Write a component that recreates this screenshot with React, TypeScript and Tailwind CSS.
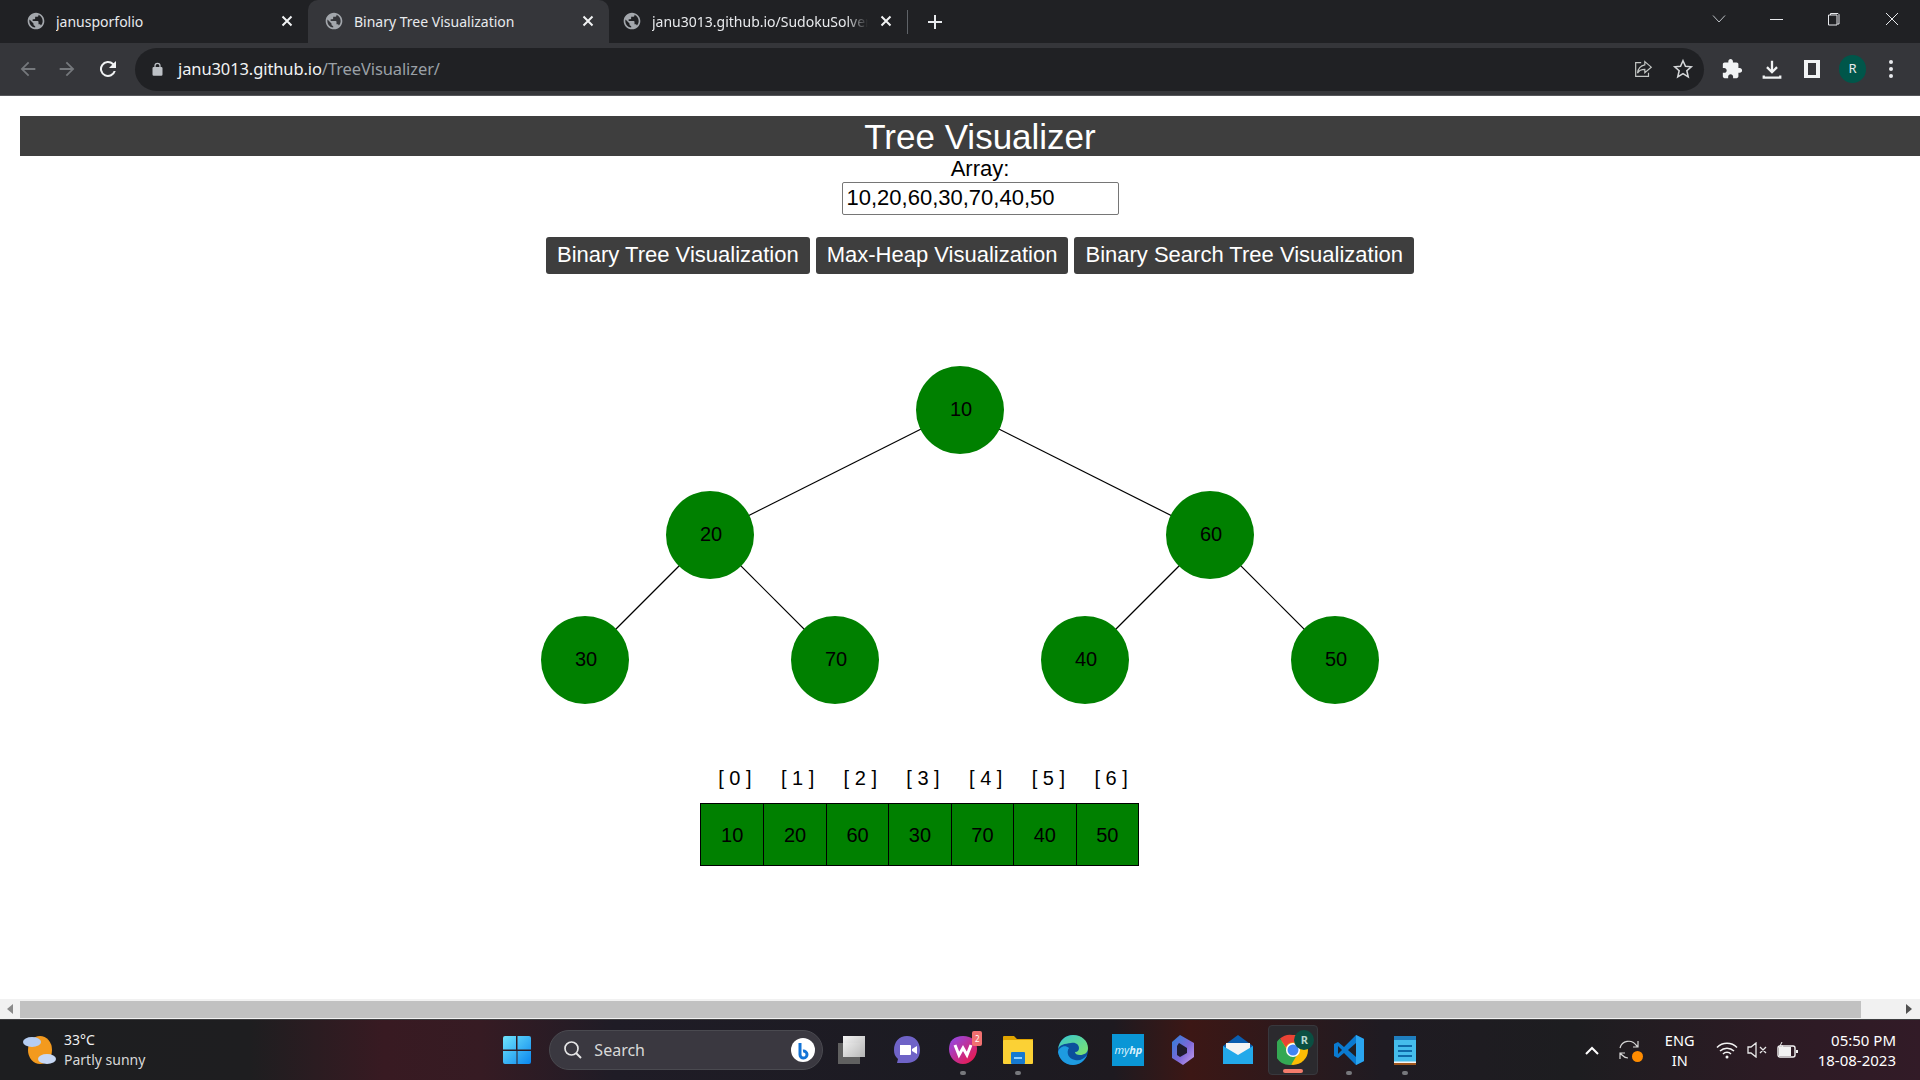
import React from "react";

const UI = { fontFamily: '"Noto Sans", "Open Sans", sans-serif' };
const GLOBE = "M12 2C6.48 2 2 6.48 2 12s4.48 10 10 10 10-4.48 10-10S17.52 2 12 2zm-1 17.93c-3.95-.49-7-3.85-7-7.93 0-.62.08-1.21.21-1.79L9 15v1c0 1.1.9 2 2 2v1.93zm6.9-2.54c-.26-.81-1-1.39-1.9-1.39h-1v-3c0-.55-.45-1-1-1H8v-2h2c.55 0 1-.45 1-1V7h2c1.1 0 2-.9 2-2v-.41c2.93 1.19 5 4.06 5 7.41 0 2.08-.8 3.97-2.1 5.39z";

function Globe() {
  return <svg width="20" height="20" viewBox="0 0 24 24" className="shrink-0"><path d={GLOBE} fill="#a3a7ac" /></svg>;
}
function CloseX() {
  return <svg width="12" height="12" viewBox="0 0 12 12" className="shrink-0"><path d="M1.500 1.500l9 9M10.500 1.500l-9 9" stroke="#f1f3f4" strokeWidth="2" /></svg>;
}

function Tab({ title, active, w, fade, left = 16 }: { title: string; active?: boolean; w: number; fade?: boolean; left?: number }) {
  return (
    <div style={{ width: w, paddingLeft: left }} className={`flex h-full items-center pr-[15px] pb-[1px] shrink-0 ${active ? "rounded-t-[10px] bg-[#35363a]" : ""}`}>
      <Globe />
      <span className={`ml-[10px] flex-1 overflow-hidden whitespace-nowrap text-[14px] text-[#e8eaed] ${fade ? "[mask-image:linear-gradient(90deg,#000_90%,transparent_100%)]" : ""}`}>{title}</span>
      <span className={fade ? "ml-[12px]" : ""}><CloseX /></span>
    </div>
  );
}

function TabBar() {
  return (
    <div className="flex h-[43px] items-center bg-[#202124] pl-[10px]" style={UI}>
      <div className="flex h-full items-center">
        <Tab title="janusporfolio" w={298} />
        <Tab title="Binary Tree Visualization" active w={301} />
        <Tab title="janu3013.github.io/SudokuSolver" w={298} left={13} fade />
      </div>
      <div className="h-[24px] w-px bg-[#5f6368]" />
      <svg width="18" height="18" viewBox="0 0 18 18" className="ml-[18px]"><path d="M9 2v14M2 9h14" stroke="#e8eaed" strokeWidth="2" /></svg>
      <div className="ml-auto flex items-center pb-[5px] pr-[21px]">
        <svg width="14" height="10" viewBox="0 0 14 10"><path d="M1 1.500l6 6.500 6-6.500" fill="none" stroke="#bdc1c6" strokeWidth="1" /></svg>
        <div className="ml-[44px] h-px w-[13px] bg-[#e8eaed]" />
        <svg width="14" height="14" viewBox="0 0 14 14" className="ml-[44px]"><path d="M3.500 3V1.500h7.500l1 1V12h-1.500M1.500 3h8.500v10H1.500z" fill="none" stroke="#e8eaed" strokeWidth="1" /></svg>
        <svg width="14" height="14" viewBox="0 0 14 14" className="ml-[44px]"><path d="M1 1l12 12M13 1L1 13" stroke="#e8eaed" strokeWidth="1" /></svg>
      </div>
    </div>
  );
}

function ToolBar() {
  return (
    <div className="flex h-[53px] items-center border-b border-[#55565a] bg-[#35363a]" style={UI}>
      <svg width="22" height="22" viewBox="0 0 24 24" className="ml-[17px]"><path d="M20 11H7.800l5.600-5.600L12 4l-8 8 8 8 1.400-1.400L7.800 13H20z" fill="#75787c" /></svg>
      <svg width="22" height="22" viewBox="0 0 24 24" className="ml-[17px]"><path d="M4 11h12.200l-5.600-5.600L12 4l8 8-8 8-1.400-1.400 5.600-5.600H4z" fill="#75787c" /></svg>
      <svg width="24" height="24" viewBox="0 0 24 24" className="ml-[18px]"><path d="M17.650 6.350A8 8 0 1 0 19.730 14h-2.080a6 6 0 1 1-1.410-6.240L13 11h7V4z" fill="#f1f3f4" /></svg>
      <div className="ml-[15px] flex h-[43px] w-[1569px] items-center rounded-full bg-[#202124] pl-[15px] pr-[10px]">
        <svg width="15" height="15" viewBox="0 0 24 24"><path d="M18 8h-1V6A5 5 0 0 0 7 6v2H6a2 2 0 0 0-2 2v10a2 2 0 0 0 2 2h12a2 2 0 0 0 2-2V10a2 2 0 0 0-2-2zM9 6a3 3 0 0 1 6 0v2H9z" fill="#bdc1c6" /></svg>
        <span className="ml-[13px] pt-[1px] text-[16.500px] tracking-[-0.1px] text-[#f1f3f4]">janu3013.github.io<span className="text-[#9aa0a6]">/TreeVisualizer/</span></span>
        <svg width="22" height="22" viewBox="0 0 24 24" className="ml-auto"><path d="M14 4l7 6-7 6v-3.500c-4 0-6.500 1.300-8 4 .5-4.500 3-8 8-9zM10 5H4v15h14v-4" fill="none" stroke="#c4c7c5" strokeWidth="1.300" /></svg>
        <svg width="22" height="22" viewBox="0 0 24 24" className="ml-[18px]"><path d="M12 3l2.700 6 6.300.600-4.800 4.300 1.500 6.600L12 17l-5.700 3.500 1.500-6.600L3 9.600 9.300 9z" fill="none" stroke="#d5d7d9" strokeWidth="1.700" /></svg>
      </div>
      <svg width="22" height="22" viewBox="0 0 24 24" className="ml-[17px]"><path d="M20.500 11H19V7c0-1.100-.9-2-2-2h-4V3.500C13 2.120 11.880 1 10.500 1S8 2.120 8 3.500V5H4c-1.100 0-1.990.9-1.990 2v3.800H3.500c1.490 0 2.700 1.210 2.700 2.700s-1.210 2.700-2.700 2.700H2V20c0 1.100.9 2 2 2h3.800v-1.500c0-1.490 1.210-2.700 2.700-2.700 1.490 0 2.700 1.210 2.700 2.700V22H17c1.100 0 2-.9 2-2v-4h1.500c1.380 0 2.500-1.120 2.500-2.500S21.880 11 20.500 11z" fill="#f1f3f4" /></svg>
      <svg width="22" height="22" viewBox="0 0 24 24" className="ml-[18px]"><path d="M12 3v12M6.500 10l5.500 5.500 5.500-5.500M3 19v2.500h18V19" fill="none" stroke="#f1f3f4" strokeWidth="2.500" /></svg>
      <div className="ml-[21px] h-[18px] w-[16px] border-[3px] border-x-[4px] border-[#f1f3f4] bg-[#35363a]" />
      <div className="ml-[19px] flex h-[28px] w-[27px] items-center justify-center rounded-full bg-[#00564a] text-[13px] text-[#e8eaed]">R</div>
      <div className="ml-[23px] flex flex-col gap-[3px]">
        <span className="h-[4px] w-[4px] rounded-full bg-[#e8eaed]" />
        <span className="h-[4px] w-[4px] rounded-full bg-[#e8eaed]" />
        <span className="h-[4px] w-[4px] rounded-full bg-[#e8eaed]" />
      </div>
    </div>
  );
}

const NODES = [
  { v: 10, x: 960, y: 135.5 },
  { v: 20, x: 710, y: 261 },
  { v: 60, x: 1210, y: 261 },
  { v: 30, x: 585, y: 386 },
  { v: 70, x: 835, y: 386 },
  { v: 40, x: 1085, y: 386 },
  { v: 50, x: 1335, y: 386 },
];
const EDGES = [[0, 1], [0, 2], [1, 3], [1, 4], [2, 5], [2, 6]];

function Tree() {
  return (
    <div className="relative h-[494px] w-full">
      <svg className="absolute inset-0 h-full w-full">
        {EDGES.map(([a, b]) => (
          <line key={b} x1={NODES[a].x} y1={NODES[a].y} x2={NODES[b].x} y2={NODES[b].y} stroke="#000" strokeWidth="1.200" />
        ))}
      </svg>
      {NODES.map((n) => (
        <div key={n.v} style={{ left: n.x - 44, top: n.y - 44 }} className="absolute flex h-[88px] w-[88px] items-center justify-center rounded-full bg-[#008000] pb-[2px] pl-[2px] text-[20px] text-black">
          {n.v}
        </div>
      ))}
    </div>
  );
}

function ArrayView() {
  const vals = [10, 20, 60, 30, 70, 40, 50];
  return (
    <div className="ml-[700px] w-[439px]">
      <div className="grid h-[20px] grid-cols-7 items-center text-[20px] leading-[20px] text-black">
        {vals.map((_, i) => <span key={i} className="pl-[7px] text-center">[ {i} ]</span>)}
      </div>
      <div className="mt-[15px] grid h-[63px] grid-cols-7 border-[1.500px] border-black">
        {vals.map((v, i) => (
          <div key={v} className={`flex items-center justify-center bg-[#008000] text-[20px] text-black ${i ? "border-l-[1.500px] border-black" : ""}`}>{v}</div>
        ))}
      </div>
    </div>
  );
}

function Scrollbar() {
  return (
    <div className="flex h-[20px] items-center bg-[#f1f1f1]">
      <div className="flex w-[20px] justify-center"><div className="h-0 w-0 border-y-[5px] border-r-[6px] border-y-transparent border-r-[#8a8a8a]" /></div>
      <div className="h-[17px] w-[1841px] bg-[#c1c1c1]" />
      <div className="flex flex-1 justify-center pl-[37px]"><div className="h-0 w-0 border-y-[5px] border-l-[6px] border-y-transparent border-l-[#505050]" /></div>
    </div>
  );
}

function Dot({ c }: { c: string }) {
  return <span className={`absolute bottom-[-9px] left-1/2 h-[4px] w-[6px] -translate-x-1/2 rounded-full ${c}`} />;
}

function Apps() {
  return (
    <div className="flex items-center">
      <svg width="30" height="30" viewBox="0 0 30 30">
        <defs><linearGradient id="win" x1="0" y1="0" x2="1" y2="1"><stop offset="0" stopColor="#6fe4fb" /><stop offset="1" stopColor="#0a86ef" /></linearGradient></defs>
        <path d="M1 3a2 2 0 0 1 2-2h11v13.500H1zM15.500 1H27a2 2 0 0 1 2 2v11.500H15.500zM1 16h13.500v13H3a2 2 0 0 1-2-2zM15.500 16H29v11a2 2 0 0 1-2 2H15.500z" fill="url(#win)" />
      </svg>
      <div className="ml-[17px] flex h-[40px] w-[274px] items-center rounded-full border border-[#4a4a50] bg-[#3a3840] pl-[13px]">
        <svg width="20" height="20" viewBox="0 0 20 20"><circle cx="8.500" cy="8.500" r="6.500" fill="none" stroke="#e6e6e6" strokeWidth="1.700" /><path d="M13 13l5 5" stroke="#e6e6e6" strokeWidth="2" /></svg>
        <span className="ml-[11px] text-[16px] text-[#d8d8d8]">Search</span>
        <span className="relative ml-auto mr-[7px] flex h-[24px] w-[24px] items-center justify-center rounded-full bg-white">
          <svg width="20" height="20" viewBox="0 0 20 20"><path d="M7 3v11.500a3.500 3.500 0 1 0 3-3.400" fill="none" stroke="#1273d6" strokeWidth="3" /></svg>
        </span>
      </div>
      <div className="relative ml-[13px] h-[32px] w-[32px]">
        <div className="absolute bottom-[2px] left-[2px] h-[21px] w-[22px] bg-[#606060]" />
        <div className="absolute right-[3px] top-[2px] h-[21px] w-[22px] bg-gradient-to-br from-white to-[#bcbcbc] opacity-95" />
      </div>
      <svg width="32" height="32" viewBox="0 0 32 32" className="ml-[23px]">
        <path d="M16 2c8 0 13 6 13 14s-5 13-13 13H6l1-4c-3-3-4-5-4-9C3 8 8 2 16 2z" fill="#6f63c7" />
        <path d="M9 11h10a1 1 0 0 1 1 1v8a1 1 0 0 1-1 1H9zM21 15l5-3v8l-5-3z" fill="#fff" />
      </svg>
      <span className="relative ml-[24px] block h-[32px] w-[32px]">
        <svg width="32" height="32" viewBox="0 0 32 32">
          <defs><linearGradient id="wps" x1="0" y1="0" x2="1" y2="1"><stop offset="0" stopColor="#8c4cf0" /><stop offset="1" stopColor="#f5143c" /></linearGradient></defs>
          <path d="M16 2c9 0 14 5 14 13s-6 15-14 15S2 23 2 15 7 2 16 2z" fill="url(#wps)" />
          <path d="M8 11l4 10 4-7 4 7 4-10" fill="none" stroke="#fff" strokeWidth="3" />
        </svg>
        <span className="absolute right-[-3px] top-[-3px] flex h-[15px] w-[10px] items-center justify-center rounded-[2px] bg-[#f07070] text-[8px] leading-none text-white">2</span>
        <Dot c="bg-[#77787c]" />
      </span>
      <span className="relative ml-[23px] block h-[32px] w-[32px]">
        <svg width="32" height="32" viewBox="0 0 32 32">
          <path d="M1 3a1 1 0 0 1 1-1h10l3 3h16v6H1z" fill="#e0a400" />
          <rect x="1" y="6" width="30" height="24" rx="1" fill="#fbd135" />
          <rect x="9" y="18" width="14" height="12" rx="1" fill="#1679cf" />
          <rect x="12" y="23" width="8" height="2" fill="#8fd0ff" />
        </svg>
        <Dot c="bg-[#77787c]" />
      </span>
      <svg width="32" height="32" viewBox="0 0 32 32" className="ml-[23px]">
        <defs><linearGradient id="edge1" x1="0" y1="0" x2="1" y2="1"><stop offset="0" stopColor="#37c6d0" /><stop offset="1" stopColor="#7fe36a" /></linearGradient></defs>
        <circle cx="16" cy="16" r="15" fill="#0b4f9c" />
        <path d="M1 16C2 6 9 1 16 1c9 0 15 6 15 13 0 5-4 7-8 7-3 0-5-1-5-3 3 0 4-2 4-4 0-3-3-6-8-5C8 10 2 10 1 16z" fill="url(#edge1)" />
        <path d="M12 14c-3 4-1 11 6 12 5 1 9-1 12-5-2 6-8 10-14 10-8 0-14-6-15-13 1-5 7-8 11-4z" fill="#1e9be0" />
      </svg>
      <div className="ml-[23px] flex h-[32px] w-[32px] items-center justify-center bg-[#0a96d6] text-[11px] italic text-[#d8f0fb]">my<span className="font-bold">hp</span></div>
      <svg width="32" height="32" viewBox="0 0 32 32" className="ml-[23px]">
        <defs><linearGradient id="cop" x1="0" y1="0" x2="1" y2="1"><stop offset="0" stopColor="#2a7fd6" /><stop offset=".55" stopColor="#7d68d8" /><stop offset="1" stopColor="#c9a0ea" /></linearGradient></defs>
        <path d="M13 1l14 8v14l-11 8L5 24V8z" fill="url(#cop)" />
        <path d="M12 9l8 5v5l-7 4-3-2v-9z" fill="#1f1b2c" />
      </svg>
      <svg width="32" height="32" viewBox="0 0 32 32" className="ml-[23px]">
        <path d="M16 1L1 12v18h30V12z" fill="#0a5eb0" />
        <path d="M4 9h24v8l-12 7-12-7z" fill="#f4f4f4" />
        <path d="M1 12l15 9 15-9v18H1z" fill="#23a9ea" />
      </svg>
      <div className="relative ml-[14px] flex h-[50px] w-[50px] items-center justify-center rounded-[4px] border border-[#38383d] bg-[#2b2a2e]">
        <svg width="32" height="32" viewBox="0 0 32 32">
          <circle cx="16" cy="16" r="15" fill="#fbbc04" />
          <path d="M16 1a15 15 0 0 1 13 7.500H16a7.500 7.500 0 0 0-7 5L3 4.500A15 15 0 0 1 16 1z" fill="#ea4335" />
          <path d="M3 4.500A15 15 0 0 0 14 31l6-10a7.500 7.500 0 0 1-11-7z" fill="#34a853" />
          <circle cx="16" cy="16" r="7" fill="#fff" />
          <circle cx="16" cy="16" r="5.500" fill="#4285f4" />
        </svg>
        <span className="absolute right-[3px] top-[4px] flex h-[20px] w-[20px] items-center justify-center rounded-full bg-[#0a4f42] text-[11px] font-bold text-[#b8d8d0]">R</span>
        <span className="absolute bottom-[1px] left-1/2 h-[4px] w-[20px] -translate-x-1/2 rounded-full bg-[#f47c6c]" />
      </div>
      <span className="relative ml-[15px] block h-[32px] w-[32px]">
        <svg width="32" height="32" viewBox="0 0 32 32">
          <path d="M23 1l8 4v22l-8 4-12-12-6 5-4-2V10l4-2 6 5z" fill="#0a7ad0" />
          <path d="M23 1l8 4v22l-8 4z" fill="#2aa5ef" />
          <path d="M23 9v14l-8-7z" fill="#202026" />
          <path d="M5 12v8l4-4z" fill="#202026" />
        </svg>
        <Dot c="bg-[#77787c]" />
      </span>
      <span className="relative ml-[28px] block h-[32px] w-[24px]">
        <svg width="24" height="32" viewBox="0 0 24 32">
          <rect x="1" y="2" width="22" height="28" rx="1.500" fill="#45bdeb" />
          <rect x="1" y="2" width="22" height="4" fill="#1f7fbf" />
          <rect x="1" y="27.500" width="22" height="1.500" fill="#f3f3f3" />
          <rect x="1" y="29" width="22" height="2" fill="#a0561c" />
          <path d="M5 12h14M5 17h14M5 22h14" stroke="#0e6aa8" strokeWidth="2" />
        </svg>
        <Dot c="bg-[#77787c]" />
      </span>
    </div>
  );
}

function Tray() {
  return (
    <div className="flex items-center text-white">
      <svg width="14" height="9" viewBox="0 0 14 9"><path d="M1 8l6-6 6 6" fill="none" stroke="#fff" strokeWidth="2" /></svg>
      <span className="relative ml-[18px] block h-[24px] w-[24px]">
        <svg width="24" height="24" viewBox="0 0 24 24"><path d="M3 10a9 9 0 0 1 16-3l2 2M3 15l2 2a9 9 0 0 0 6 3M21 3v6h-5M3 21v-6h5" fill="none" stroke="#d8d8d8" strokeWidth="1.200" /></svg>
        <span className="absolute bottom-[0px] right-[-2px] h-[11px] w-[11px] rounded-full bg-[#ff8c00]" />
      </span>
      <div className="ml-[19px] flex w-[40px] flex-col items-center text-[14.500px] leading-[20px]">
        <span>ENG</span><span>IN</span>
      </div>
      <svg width="22" height="18" viewBox="0 0 22 18" className="ml-[16px]"><path d="M1 6.500a14 14 0 0 1 20 0M4 10a10 10 0 0 1 14 0M7 13a5.500 5.500 0 0 1 8 0" fill="none" stroke="#f2f2f2" strokeWidth="1.500" /><circle cx="11" cy="16" r="1.500" fill="#f2f2f2" /></svg>
      <svg width="20" height="16" viewBox="0 0 20 16" className="ml-[9px]"><path d="M1 5h3l5-4v14l-5-4H1zM13 5l6 6M19 5l-6 6" fill="none" stroke="#e8e8e8" strokeWidth="1.300" /></svg>
      <svg width="22" height="18" viewBox="0 0 22 18" className="ml-[10px]"><rect x="1" y="5" width="17" height="11" rx="2" fill="none" stroke="#f2f2f2" strokeWidth="1.400" /><rect x="2" y="6" width="12" height="9" fill="#f2f2f2" /><path d="M19 9h2v3h-2z" fill="#f2f2f2" /><path d="M5 1L3 5h3L4 8" stroke="#f2f2f2" fill="none" /></svg>
      <div className="ml-[19px] flex flex-col items-end text-[15px] leading-[20px]">
        <span>05:50 PM</span><span>18-08-2023</span>
      </div>
    </div>
  );
}

function Taskbar() {
  return (
    <div style={UI} className="relative flex h-[61px] items-center border-t border-[#3e3e40] bg-[linear-gradient(90deg,#1d1e20_0%,#1e1e20_13%,#381a22_20%,#361b23_25%,#1f1c26_32%,#1c1b22_50%,#1e1a20_58%,#3c1715_62%,#1f1b22_72%,#1d1d20_82%,#2c1b24_92%,#321b27_100%)] pl-[22px] pr-[24px]">
      <svg width="36" height="32" viewBox="0 0 36 32">
        <ellipse cx="18" cy="16" rx="12" ry="14" fill="#f39a1e" />
        <ellipse cx="10" cy="8" rx="9" ry="5" fill="#b5cdf2" />
        <ellipse cx="25" cy="25" rx="9" ry="5" fill="#c7d8f5" />
      </svg>
      <div className="ml-[6px] flex flex-col text-[14px] leading-[20px] text-[#f0f0f0]">
        <span>33°C</span><span className="text-[#d8d8d8]">Partly sunny</span>
      </div>
      <div className="ml-[357px]"><Apps /></div>
      <div className="ml-auto"><Tray /></div>
    </div>
  );
}

export default function App() {
  return (
    <div className="flex h-screen w-[1920px] flex-col overflow-hidden bg-white">
      <TabBar />
      <ToolBar />
      <main className="flex-1 overflow-hidden pt-[20px]" style={{ fontFamily: '"Liberation Sans", Arial, sans-serif' }}>
        <h1 className="ml-[20px] h-[40px] w-[1920px] bg-[#3e3e3e] text-center text-[35px] leading-[41px] text-white">Tree Visualizer</h1>
        <div className="w-[1960px] text-center">
          <div className="h-[26px] text-[22px] leading-[26px] text-black">Array:</div>
          <input readOnly value="10,20,60,30,70,40,50" className="h-[33px] w-[277px] rounded-[2px] border border-[#767676] px-[4px] pb-[2px] text-[22px] text-black outline-none" />
          <div className="mt-[22px] flex h-[37px] justify-center gap-[6px]">
            {["Binary Tree Visualization", "Max-Heap Visualization", "Binary Search Tree Visualization"].map((t) => (
              <button key={t} className="rounded-[3px] bg-[#3e3e3e] px-[11px] pb-[2px] text-[22px] text-white">{t}</button>
            ))}
          </div>
        </div>
        <Tree />
        <ArrayView />
      </main>
      <Scrollbar />
      <Taskbar />
    </div>
  );
}
